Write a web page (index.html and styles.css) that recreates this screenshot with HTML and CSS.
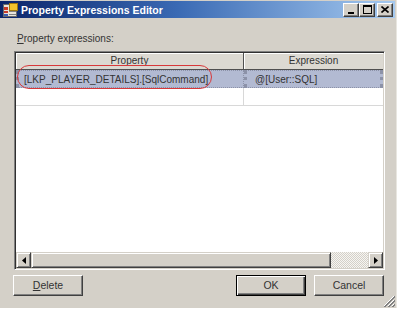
FILE: index.html
```html
<!DOCTYPE html>
<html lang="en">
<head>
	<meta charset="UTF-8">
	<title>Property Expressions Editor</title>
	<link rel="stylesheet" href="styles.css">
</head>
<body>

<div class="window">
	<div class="titlebar">
		<svg class="title-icon" width="15" height="14" viewBox="0 0 15 14">
			<rect x="0.5" y="1.5" width="13" height="12" fill="#e8e4dc" stroke="#6a6a6a"/>
			<rect x="1" y="4" width="4" height="3" fill="#c83a2a"/>
			<rect x="1" y="8" width="4" height="2" fill="#c83a2a"/>
			<rect x="1" y="11" width="4" height="2" fill="#3a5cb0"/>
			<rect x="6" y="8" width="7" height="1" fill="#808080"/>
			<rect x="6" y="11" width="7" height="1" fill="#808080"/>
			<rect x="6.5" y="0.5" width="8" height="7" fill="#f4c42c" stroke="#a07810"/>
		</svg>
		<div class="title-text">Property Expressions Editor</div>
		<div class="title-buttons">
			<div class="cap-btn">
				<svg width="8" height="8" viewBox="0 0 8 8"><rect x="1" y="6" width="6" height="2" fill="#000"/></svg>
			</div>
			<div class="cap-btn">
				<svg width="9" height="9" viewBox="0 0 9 9"><rect x="0.5" y="0.5" width="8" height="8" fill="none" stroke="#000"/><rect x="0" y="0" width="9" height="2" fill="#000"/></svg>
			</div>
			<div class="cap-btn close">
				<svg width="8" height="7" viewBox="0 0 8 7"><path d="M0.5 0.5 L7.5 6.5 M7.5 0.5 L0.5 6.5" stroke="#000" stroke-width="1.6"/></svg>
			</div>
		</div>
	</div>

	<div class="content">
		<div class="label"><u>P</u>roperty expressions:</div>

		<div class="grid">
			<div class="grid-head">
				<div class="head-cell">Property</div>
				<div class="head-cell">Expression</div>
			</div>
			<div class="grid-row selected">
				<div class="cell">[LKP_PLAYER_DETAILS].[SqlCommand]</div>
				<div class="cell">@[User::SQL]</div>
			</div>
			<div class="grid-row">
				<div class="cell"></div>
				<div class="cell"></div>
			</div>
			<div class="grid-fill"></div>
			<div class="hscroll">
				<div class="sb-btn">
					<svg width="4" height="7" viewBox="0 0 4 7"><path d="M4 0 L0 3.5 L4 7 Z" fill="#000"/></svg>
				</div>
				<div class="sb-thumb"></div>
				<div class="sb-track"></div>
				<div class="sb-btn">
					<svg width="4" height="7" viewBox="0 0 4 7"><path d="M0 0 L4 3.5 L0 7 Z" fill="#000"/></svg>
				</div>
			</div>
			<div class="mark"></div>
		</div>

		<div class="actions">
			<div class="btn delete"><u>D</u>elete</div>
			<div class="btn-group">
				<div class="btn default">OK</div>
				<div class="btn">Cancel</div>
			</div>
		</div>
	</div>

	<svg class="grip" width="12" height="12" viewBox="0 0 12 12">
		<path d="M11 1 L1 11 M11 5 L5 11 M11 9 L9 11" stroke="#fff" stroke-width="1"/>
		<path d="M12 1 L1 12 M12 2 L2 12 M12 5 L5 12 M12 6 L6 12 M12 9 L9 12 M12 10 L10 12" stroke="#808080" stroke-width="1"/>
	</svg>
</div>

</body>
</html>
```

FILE: styles.css
```css
html, body {
	margin: 0;
	background: #fff;
	font-family: "Liberation Sans", Arial, sans-serif;
	font-size: 10px;
	color: #222;
}

.window {
	position: relative;
	width: 397px;
	height: 308px;
	box-sizing: border-box;
	background: #d4d0c8;
	border-right: 1px solid #e8e6e0;
	display: flex;
	flex-direction: column;
}

.titlebar {
	height: 17px;
	margin: 1px 1px 0 0;
	background: linear-gradient(to right, #0a246a 0%, #3a6ab4 45%, #a6caf0 100%);
	display: flex;
	align-items: center;
	padding-left: 3px;
}

.title-icon {
	flex: none;
	margin-right: 3px;
}

.title-text {
	flex: 1;
	color: #fff;
	font-weight: bold;
	font-size: 10.5px;
}

.title-buttons {
	display: flex;
	align-items: center;
	margin-right: 2px;
}

.cap-btn {
	width: 14px;
	height: 12px;
	background: #d4d0c8;
	border: 1px solid;
	border-color: #fff #404040 #404040 #fff;
	box-shadow: inset -1px -1px #808080;
	display: flex;
	align-items: center;
	justify-content: center;
}

.cap-btn.close {
	margin-left: 2px;
}

.content {
	flex: 1;
	display: flex;
	flex-direction: column;
	padding: 14px 11px 0 14px;
}

.label {
	height: 13px;
	line-height: 13px;
	padding-left: 3px;
	color: #333;
}

.grid {
	position: relative;
	margin-top: 6px;
	height: 219px;
	box-sizing: border-box;
	border: 1px solid;
	border-color: #808080 #fff #fff #808080;
	box-shadow: inset 1px 1px #303030, inset -1px -1px #d4d0c8;
	background: #fff;
	padding: 1px;
	display: flex;
	flex-direction: column;
}

.grid-head,
.grid-row {
	display: grid;
	grid-template-columns: 228px 1fr;
}

.head-cell {
	height: 16px;
	line-height: 16px;
	text-align: center;
	background: #dcd9d2;
	border-right: 1px solid #505050;
	border-bottom: 1px solid #505050;
	box-shadow: inset 1px 1px #fff;
	color: #333;
}

.head-cell:last-child {
	border-right: none;
}

.cell {
	height: 17px;
	line-height: 17px;
	padding: 0 6px;
	white-space: nowrap;
	border-right: 1px solid #d8d8d8;
	border-bottom: 1px solid #d8d8d8;
	color: #333;
}

.cell:first-child {
	padding-left: 5px;
}

.cell:last-child {
	border-right: none;
	padding-left: 8px;
}

.selected .cell {
	background: #b2bad2;
	border-color: #8c92a8;
	border-style: dotted;
	border-top: 1px dotted #8c92a8;
	height: 16px;
}

.grid-fill {
	flex: 1;
}

.hscroll {
	height: 16px;
	display: flex;
}

.sb-btn {
	width: 13px;
	height: 14px;
	background: #d4d0c8;
	border: 1px solid;
	border-color: #d4d0c8 #404040 #404040 #d4d0c8;
	box-shadow: inset 1px 1px #fff, inset -1px -1px #808080;
	display: flex;
	align-items: center;
	justify-content: center;
}

.sb-thumb {
	width: 298px;
	height: 14px;
	background: #d4d0c8;
	border: 1px solid;
	border-color: #d4d0c8 #404040 #404040 #d4d0c8;
	box-shadow: inset 1px 1px #fff, inset -1px -1px #808080;
}

.sb-track {
	flex: 1;
	background-color: #eceae4;
	background-image: repeating-conic-gradient(#d4d0c8 0 25%, #f6f5f2 0 50%);
	background-size: 2px 2px;
}

.mark {
	position: absolute;
	left: 2px;
	top: 13px;
	width: 193px;
	height: 22px;
	border: 1px solid #d8383a;
	border-radius: 12px;
}

.actions {
	margin-top: 5px;
	display: flex;
	justify-content: space-between;
	margin-left: -1px;
	margin-right: 1px;
}

.btn-group {
	display: flex;
	gap: 8px;
}

.btn {
	width: 68px;
	height: 19px;
	line-height: 19px;
	text-align: center;
	background: #d4d0c8;
	border: 1px solid;
	border-color: #fff #404040 #404040 #fff;
	box-shadow: inset -1px -1px #808080;
	color: #333;
	font-size: 10.5px;
}

.btn.default {
	border-color: #000;
	box-shadow: inset 1px 1px #fff, inset -1px -1px #404040, inset -2px -2px #808080;
}

.grip {
	position: absolute;
	right: 1px;
	bottom: 1px;
}
```
